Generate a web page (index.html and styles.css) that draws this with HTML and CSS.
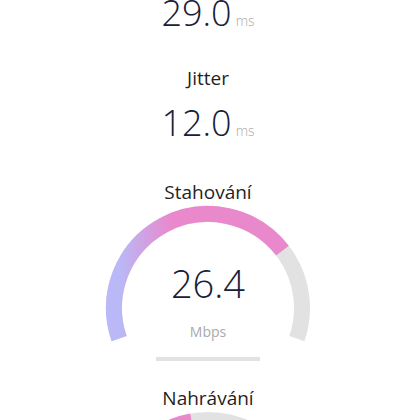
FILE: index.html
```
<!DOCTYPE html>
<html lang="cs">
<head>
    <meta charset="UTF-8">
    <meta name="viewport" content="width=device-width, initial-scale=1.0">
    <title>Test rychlosti</title>
    <link rel="stylesheet" href="styles.css">
</head>
<body>
    <main class="results">
        <section class="metric">
            <h2 class="metric-label">Ping</h2>
            <div class="metric-value">29.0<span class="metric-unit">ms</span></div>
        </section>
        <section class="metric">
            <h2 class="metric-label">Jitter</h2>
            <div class="metric-value">12.0<span class="metric-unit">ms</span></div>
        </section>

        <section class="gauge">
            <h2 class="metric-label">Stahování</h2>
            <div class="gauge-dial">
                <svg class="gauge-arc" width="208" height="140" viewBox="0 0 208 140">
                    <defs>
                        <linearGradient id="gradDown" gradientUnits="userSpaceOnUse" x1="16" y1="0" x2="68" y2="0">
                            <stop offset="0" stop-color="#bab8f7"/>
                            <stop offset="1" stop-color="#ea88cc"/>
                        </linearGradient>
                    </defs>
                    <path d="M15.12 134.6 A94 94 0 1 1 192.88 134.6" class="gauge-track"/>
                    <path d="M15.12 134.6 A94 94 0 0 1 178.48 46.65" class="gauge-fill" stroke="url(#gradDown)"/>
                </svg>
                <div class="gauge-readout">
                    <div class="gauge-value">26.4</div>
                    <div class="gauge-unit">Mbps</div>
                </div>
            </div>
            <div class="gauge-bar"></div>
        </section>

        <section class="gauge">
            <h2 class="metric-label">Nahrávání</h2>
            <div class="gauge-dial">
                <svg class="gauge-arc" width="208" height="140" viewBox="0 0 208 140">
                    <defs>
                        <linearGradient id="gradUp" gradientUnits="userSpaceOnUse" x1="16" y1="0" x2="68" y2="0">
                            <stop offset="0" stop-color="#bab8f7"/>
                            <stop offset="1" stop-color="#ea88cc"/>
                        </linearGradient>
                    </defs>
                    <path d="M15.12 134.6 A94 94 0 1 1 192.88 134.6" class="gauge-track"/>
                    <path d="M15.12 134.6 A94 94 0 0 1 87.68 11.43" class="gauge-fill" stroke="url(#gradUp)"/>
                </svg>
                <div class="gauge-readout">
                    <div class="gauge-value">8.1</div>
                    <div class="gauge-unit">Mbps</div>
                </div>
            </div>
            <div class="gauge-bar"></div>
        </section>
    </main>
</body>
</html>
```

FILE: styles.css
```
:root {
    --font-body: 'Open Sans', 'Noto Sans', sans-serif;
    --color-bg: #ffffff;
    --color-label: #1f1f24;
    --color-value: #16203a;
    --color-unit: #a9a9ad;
    --color-track: #e2e2e2;
}
body {
    font-family: var(--font-body);
    background-color: var(--color-bg);
    margin: 0;
}

.results {
    display: flex;
    flex-direction: column;
    align-items: center;
    margin-top: -41px;
}

/* ping / jitter */
.metric {
    display: flex;
    flex-direction: column;
    align-items: center;
}
.metric + .metric { margin-top: 38px; }
.metric-label {
    margin: 0;
    font-size: 19px;
    font-weight: 400;
    line-height: 19px;
    color: var(--color-label);
}
.metric-value {
    margin-top: 17px;
    display: flex;
    align-items: baseline;
    font-size: 36px;
    font-weight: 300;
    line-height: 36px;
    color: var(--color-value);
}
.metric-unit {
    margin-left: 4px;
    font-size: 14px;
    line-height: 14px;
    color: var(--color-unit);
}

/* gauges */
.gauge {
    display: flex;
    flex-direction: column;
    align-items: center;
    margin-top: 42px;
}
.gauge + .gauge { margin-top: 28px; }
.gauge-dial {
    display: grid;
    margin-top: 2px;
}
.gauge-arc,
.gauge-readout { grid-area: 1 / 1; }
.gauge-arc { display: block; }
.gauge-track,
.gauge-fill {
    fill: none;
    stroke-width: 16;
}
.gauge-track { stroke: var(--color-track); }
.gauge-readout {
    display: flex;
    flex-direction: column;
    align-items: center;
    padding-top: 60px;
}
.gauge-value {
    font-size: 38px;
    font-weight: 300;
    line-height: 38px;
    color: var(--color-value);
}
.gauge-unit {
    margin-top: 23px;
    font-size: 14px;
    line-height: 14px;
    color: var(--color-unit);
}
.gauge-bar {
    width: 104px;
    height: 4px;
    margin-top: 13px;
    background-color: var(--color-track);
}
```
